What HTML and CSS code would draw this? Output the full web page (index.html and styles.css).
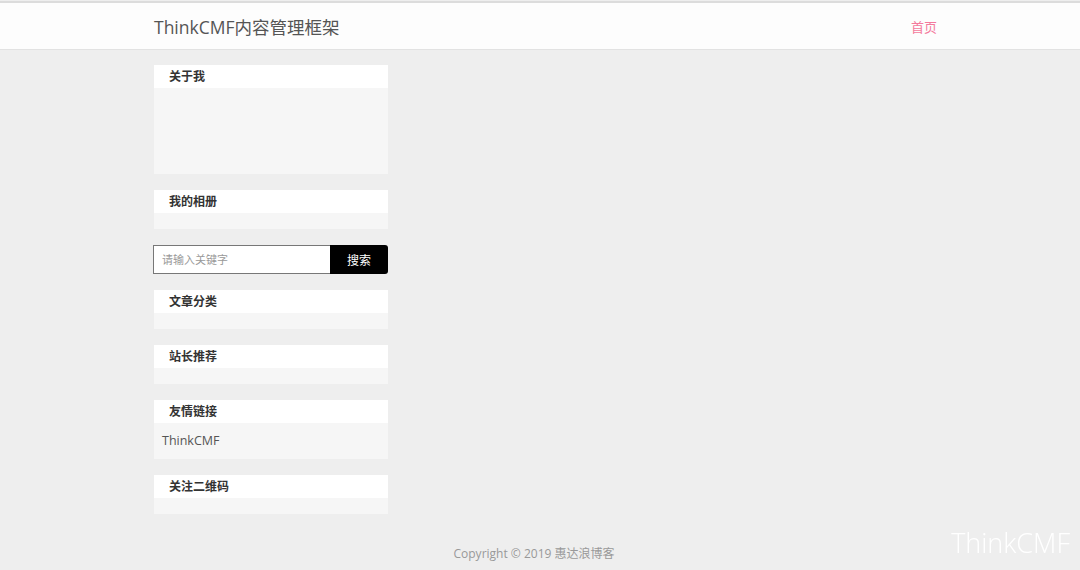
FILE: index.html
```html
<!DOCTYPE html>
<html lang="zh-CN">
<head>
  <meta charset="UTF-8" />
  <title>ThinkCMF内容管理框架</title>
  <link rel="stylesheet" href="styles.css">
</head>
<body>

  <div class="header">
    <div class="wrap">
      <a class="logo" href="#">ThinkCMF内容管理框架</a>
      <a class="nav-link" href="#">首页</a>
    </div>
  </div>

  <div class="wrap main">
    <div class="sidebar">
      <div class="widget">
        <h3>关于我</h3>
        <div class="widget-body about"></div>
      </div>

      <div class="widget">
        <h3>我的相册</h3>
        <div class="widget-body"></div>
      </div>

      <form class="search">
        <input type="text" placeholder="请输入关键字">
        <button type="button">搜索</button>
      </form>

      <div class="widget">
        <h3>文章分类</h3>
        <div class="widget-body"></div>
      </div>

      <div class="widget">
        <h3>站长推荐</h3>
        <div class="widget-body"></div>
      </div>

      <div class="widget">
        <h3>友情链接</h3>
        <div class="widget-body links">
          <a href="#">ThinkCMF</a>
        </div>
      </div>

      <div class="widget">
        <h3>关注二维码</h3>
        <div class="widget-body"></div>
      </div>
    </div>
  </div>

  <div class="footer">Copyright © 2019 惠达浪博客</div>

  <div class="watermark">ThinkCMF</div>

</body>
</html>
```

FILE: styles.css
```css
body {
  margin: 0;
  background: #eeeeee;
  font-family: 'Open Sans', 'Noto Sans CJK SC', sans-serif;
  color: #333;
}

a {
  text-decoration: none;
}

.wrap {
  width: 772px;
  margin: 0 auto;
}

.header {
  margin-top: 1px;
  border-top: 2px solid #dcdcdc;
  border-bottom: 1px solid #e2e2e2;
  background: #fdfdfd;
}

.header .wrap {
  height: 46px;
  display: flex;
  align-items: center;
  justify-content: space-between;
}

.logo {
  font-size: 17.5px;
  color: #555;
}

.nav-link {
  font-size: 13px;
  color: #f47a9c;
  margin-right: -11px;
}

.main {
  padding-top: 15px;
}

.sidebar {
  width: 234px;
  display: flex;
  flex-direction: column;
  gap: 16px;
}

.widget h3 {
  margin: 0;
  height: 23px;
  line-height: 23px;
  padding-left: 15px;
  font-size: 12px;
  font-weight: bold;
  background: #fff;
  color: #333;
}

.widget-body {
  background: #f6f6f6;
  min-height: 16px;
}

.widget-body.about {
  height: 86px;
}

.widget-body.links {
  padding: 8px 8px;
  font-size: 12.5px;
  line-height: 20px;
}

.links a {
  color: #555;
}

.search {
  display: flex;
  height: 29px;
  margin: 0 0 0 -1px;
}

.search input {
  flex: 1;
  min-width: 0;
  box-sizing: border-box;
  height: 29px;
  border: 1px solid #777;
  border-right: none;
  padding: 0 8px;
  font-family: inherit;
  font-size: 11px;
  outline: none;
}

.search input::placeholder {
  color: #999;
}

.search button {
  width: 58px;
  height: 29px;
  border: none;
  border-radius: 0 3px 3px 0;
  background: #000;
  color: #fff;
  font-family: inherit;
  font-size: 12px;
}

.footer {
  text-align: center;
  padding: 30px 12px 0 0;
  font-size: 12px;
  color: #999;
}

.watermark {
  position: fixed;
  right: 10px;
  bottom: 9px;
  font-size: 27px;
  font-weight: 300;
  color: #fff;
}
```
